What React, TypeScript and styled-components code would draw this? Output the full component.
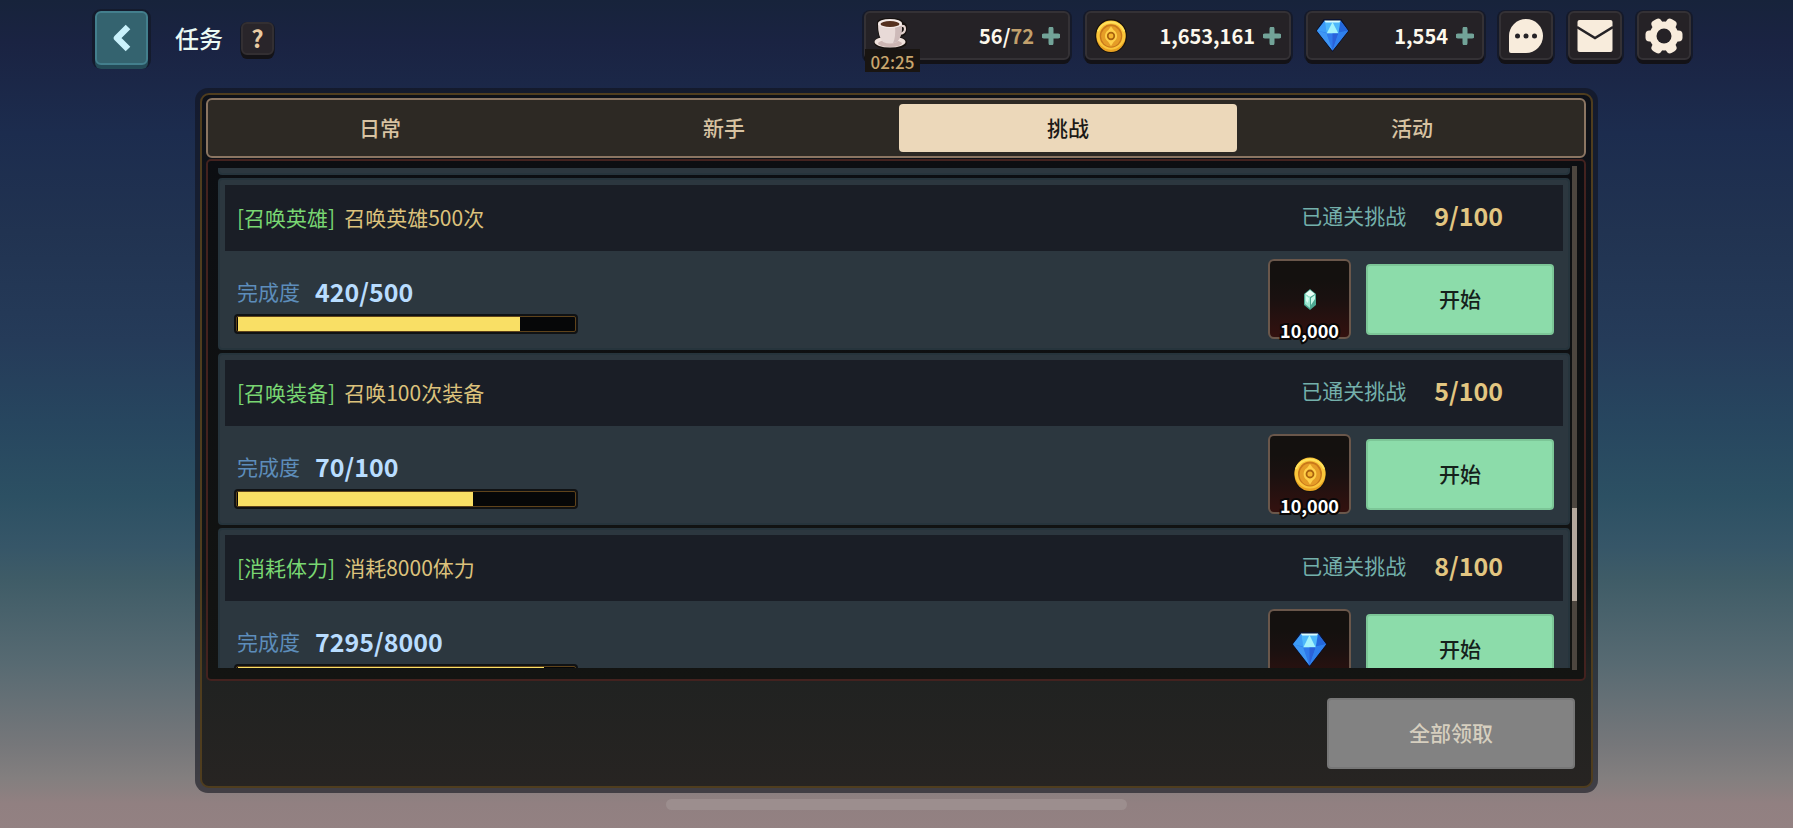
import React from "react";
import styled, { createGlobalStyle } from "styled-components";

const sans = `"Noto Sans CJK SC", "Noto Sans", sans-serif`;

const GlobalStyle = createGlobalStyle`
  *, *::before, *::after { box-sizing: border-box; }
  html, body, #root { height: 100%; }
  body { margin: 0; font-family: ${sans}; font-size: 21px; line-height: 28px; color: #f7ecdc; }
  button { font: inherit; color: inherit; border: 0; padding: 0; cursor: pointer; }
  h1, h2, p { margin: 0; font-weight: 400; }
  svg { display: block; }
`;

const Screen = styled.div`
  display: flex;
  flex-direction: column;
  height: 100vh;
  min-height: 560px;
  overflow: hidden;
  background: linear-gradient(
    180deg,
    #17233b 0%,
    #1a2342 5%,
    #1c2c4e 16%,
    #213351 28%,
    #253b59 41%,
    #27465f 51%,
    #2c5063 60%,
    #365668 66%,
    #3f5c67 70%,
    #576a72 80%,
    #76777a 90%,
    #837f7f 94%,
    #918081 97%,
    #938182 100%
  );
`;

const TopBar = styled.header`
  display: flex;
  justify-content: space-between;
  align-items: flex-start;
  padding: 11px 102px 0 95px;
  height: 88px;
  flex: none;
`;

const TitleGroup = styled.div`
  display: flex;
  align-items: center;
`;

const BackButton = styled.button`
  display: grid;
  place-items: center;
  width: 53px;
  height: 54px;
  border-radius: 6px;
  background: #34636f;
  border: 2px solid #437f8d;
  box-shadow: 0 4px 0 #244b58, 0 1px 0 3px #141b2d;
`;

const Title = styled.h1`
  margin-left: 27px;
  font-size: 24px;
  line-height: 32px;
  font-weight: 500;
  color: #eafaf4;
`;

const HelpButton = styled.button`
  width: 33px;
  height: 33px;
  margin-left: 18px;
  border-radius: 6px;
  background: #29252a;
  border: 2px solid #332f32;
  box-shadow: 0 4px 0 #141317, 0 1px 0 1px #141825;
  color: #eacba2;
  font-size: 24px;
  line-height: 28px;
  font-weight: 700;
`;

const Resources = styled.div`
  display: flex;
  gap: 15px;
`;

const Plate = styled.div<{ $wide?: boolean }>`
  display: flex;
  align-items: center;
  position: relative;
  width: ${(p) => (p.$wide ? 206 : 178)}px;
  height: 49px;
  padding: 0 7px 0 8px;
  border-radius: 6px;
  background: #252226;
  border: 2px solid #343135;
  box-shadow: 0 4px 0 #131217, 0 1px 0 2px #151a2a;
`;

const Amount = styled.span`
  flex: 1;
  text-align: right;
  font-size: 20px;
  font-weight: 700;
  color: #fdf8ec;
`;

const Limit = styled.span`
  color: #c2a06c;
`;

const AddButton = styled.button`
  display: grid;
  place-items: center;
  width: 20px;
  height: 24px;
  margin-left: 7px;
  background: none;
`;

const Timer = styled.span`
  position: absolute;
  left: -1px;
  top: 36px;
  width: 55px;
  height: 23px;
  background: #191512;
  color: #c9a66e;
  font-size: 17px;
  line-height: 25px;
  font-weight: 500;
  text-align: center;
`;

const IconButton = styled.button`
  display: grid;
  place-items: center;
  width: 54px;
  height: 49px;
  border-radius: 6px;
  background: #252226;
  border: 2px solid #343135;
  box-shadow: 0 4px 0 #131217, 0 1px 0 2px #151a2a;
`;

const Panel = styled.main`
  display: flex;
  flex-direction: column;
  flex: 1;
  min-height: 0;
  margin: 0 195px;
  padding: 5px;
  border-radius: 13px;
  background: rgba(16, 19, 28, 0.6);
`;

const PanelBody = styled.div`
  display: flex;
  flex-direction: column;
  flex: 1;
  min-height: 0;
  border: 2px solid #4f3d1e;
  border-radius: 9px;
  padding: 3px 5px 17px 4px;
  background: linear-gradient(180deg, #0e1118 0%, #101416 70%, #202221 84%, #272422 100%);
`;

const Tabs = styled.nav`
  display: grid;
  grid-template-columns: repeat(4, 1fr);
  flex: none;
  height: 60px;
  padding: 4px 0;
  border: 2px solid #8b7562;
  border-radius: 6px;
  background: #2d2924;
`;

const Tab = styled.button<{ $active?: boolean }>`
  margin: 0 3px;
  padding-bottom: 3px;
  border-radius: 4px;
  font-weight: 500;
  background: ${(p) => (p.$active ? "#ecd8ba" : "transparent")};
  color: ${(p) => (p.$active ? "#1d1a17" : "#d8c3a2")};
`;

const ListFrame = styled.section`
  display: flex;
  flex: 1;
  min-height: 0;
  gap: 2px;
  margin-top: 1px;
  padding: 7px 7px 11px 10px;
  border: 2px solid #43221f;
  border-radius: 5px;
  background: linear-gradient(180deg, #0c0e12, #131412);
`;

const List = styled.div`
  display: flex;
  flex-direction: column;
  flex: 1;
  gap: 3px;
  min-width: 0;
  overflow: hidden;
`;

const cardSurface = `
  flex: none;
  border: 2px solid #26343c;
  background: #2c373f;
`;

const CardEdge = styled.div`
  ${cardSurface}
  height: 7px;
  border-top: 0;
  border-radius: 0 0 4px 4px;
`;

const Card = styled.article`
  ${cardSurface}
  height: 172px;
  padding: 5px;
  border-radius: 4px;
`;

const CardHeader = styled.div`
  display: flex;
  align-items: center;
  height: 66px;
  padding: 0 60px 3px 12px;
  background: #1a1e26;
`;

const QuestTitle = styled.h2`
  flex: 1;
  font-size: 21px;
  line-height: 28px;
  font-weight: 400;
  color: #dcc27c;
`;

const Tag = styled.span`
  margin-right: 9px;
  color: #79d672;
`;

const ClearedLabel = styled.span`
  margin-bottom: 4px;
  color: #74b0ab;
`;

const Figures = styled.span<{ $gold?: boolean }>`
  font-size: 25px;
  font-weight: 700;
  margin-left: ${(p) => (p.$gold ? 28 : 15)}px;
  margin-bottom: ${(p) => (p.$gold ? 4 : 0)}px;
  color: ${(p) => (p.$gold ? "#e2c681" : "#b9ddff")};
`;

const CardBody = styled.div`
  display: flex;
  align-items: flex-start;
  padding: 8px 9px 0;
`;

const Completion = styled.div`
  flex: 1;
`;

const CompletionText = styled.p`
  display: flex;
  align-items: center;
  padding: 18px 0 9px 3px;
  color: #5d8dba;
`;

const Bar = styled.div`
  width: 344px;
  height: 20px;
  padding: 2px;
  border-radius: 4px;
  background: #101214;
`;

const BarTrack = styled.div`
  height: 16px;
  padding: 0 1px;
  border: 1px solid #5f431b;
  border-radius: 2px;
  background: #060708;
`;

const BarFill = styled.div`
  height: 14px;
  background: #f9df65;
`;

const Reward = styled.div`
  position: relative;
  display: grid;
  place-items: center;
  width: 83px;
  height: 80px;
  border: 2px solid #6a574b;
  border-radius: 6px;
  background: linear-gradient(180deg, #14110f 25%, #1a1110 50%, #33110f 100%);
`;

const RewardCount = styled.span`
  position: absolute;
  left: 0;
  right: 0;
  bottom: -6px;
  text-align: center;
  font-size: 18px;
  font-weight: 700;
  color: #fff;
  line-height: 26px;
  paint-order: stroke fill;
  -webkit-text-stroke: 4px #0a0808;
`;

const StartButton = styled.button`
  width: 188px;
  height: 71px;
  margin: 5px 0 0 15px;
  padding-bottom: 3px;
  border: 2px solid #7cc697;
  border-radius: 4px;
  background: #8cdcaa;
  color: #15211b;
  font-weight: 500;
`;

const ScrollTrack = styled.div`
  display: flex;
  flex-direction: column;
  width: 5px;
  margin: -2px 0;
  padding-top: 342px;
  background: #4d463f;
`;

const ScrollThumb = styled.div`
  height: 93px;
  background: #b5a89c;
`;

const Footer = styled.footer`
  display: flex;
  justify-content: flex-end;
  flex: none;
  padding: 17px 11px 0 0;
`;

const ClaimAll = styled.button`
  width: 248px;
  height: 71px;
  padding-bottom: 3px;
  border: 2px solid #777;
  border-radius: 4px;
  background: #828282;
  color: #d6cfbf;
  font-weight: 500;
`;

const HomeBar = styled.div`
  flex: none;
  width: 461px;
  height: 11px;
  margin: 6px auto 18px;
  border-radius: 6px;
  background: #9c8e8e;
`;

const Coin = ({ size }: { size: number }) => (
  <svg width={size} height={size + 2} viewBox="0 0 34 36" aria-hidden="true">
    <ellipse cx="17" cy="18" rx="17" ry="18" fill="#17120f" />
    <ellipse cx="17" cy="18.500" rx="15.500" ry="16.500" fill="#e8a122" />
    <ellipse cx="17" cy="17" rx="15.500" ry="15.500" fill="#fbc63a" />
    <path d="M3 13A15 15 0 0 1 31 13" fill="none" stroke="#ffe25c" strokeWidth="2" />
    <ellipse cx="17" cy="18" rx="12" ry="12.500" fill="#c9781b" />
    <ellipse cx="17" cy="18.500" rx="10.500" ry="11" fill="#e59d27" />
    <path d="M17 8l3 4a7 7 0 0 1 0 12l-3 4.500-3-4.500a7 7 0 0 1 0-12z" fill="#ffd049" />
    <circle cx="17" cy="18" r="3.500" fill="#f6b62f" stroke="#a8620f" strokeWidth="1.800" />
  </svg>
);

const Diamond = ({ size }: { size: number }) => (
  <svg width={size} height={size} viewBox="0 0 34 34" aria-hidden="true">
    <path d="M8 0h18l8 12-17 22L0 12z" fill="#0b1330" />
    <path d="M8.500 2h17L33 12 17 32.500 1 12z" fill="#2f86f0" />
    <path d="M1 12l8-10 2 12z" fill="#3d9cf7" />
    <path d="M33 12l-7.500-10L23 14z" fill="#2467dc" />
    <path d="M9 2h16l-2 13H11z" fill="#4db8fb" />
    <path d="M8.500 1.500h17l-1.500 2H10z" fill="#d9fbff" />
    <path d="M17 3l6 12H11z" fill="#a4f3fb" />
    <path d="M1 12l10 3 6 17.500z" fill="#3f97f5" />
    <path d="M11 15h12l-6 17.500z" fill="#2f7aec" />
    <path d="M17 15h6l-6 17.500z" fill="#2a62da" />
    <path d="M33 12l-10 3-6 17.500z" fill="#2f80ee" />
  </svg>
);

const Crystal = () => (
  <svg width="14" height="21" viewBox="0 0 14 21" aria-hidden="true">
    <path d="M7 0l6 5v11l-6 5-6-5V5z" fill="#4da993" />
    <path d="M7 1l5 4-5 3-5-3z" fill="#e9fff7" />
    <path d="M2 5l5 3v11l-5-4z" fill="#9fe9d2" />
    <path d="M8 9l4-3v4l-4 6z" fill="#c6f8e8" />
    <path d="M3 7l3 2-1 5-2-2z" fill="#d9fff3" />
  </svg>
);

const Cup = () => (
  <svg width="34" height="36" viewBox="0 0 34 36" aria-hidden="true">
    <ellipse cx="16.500" cy="24.500" rx="16.500" ry="7" fill="#17120f" />
    <path d="M3 4Q4 0 16 0t13 4q5 1 4 8-1 7-7 7l-2 5H8Q3 18 3 4z" fill="#17120f" />
    <ellipse cx="16" cy="24" rx="15.500" ry="5.500" fill="#f0e2dd" />
    <ellipse cx="16" cy="25.500" rx="12" ry="3.500" fill="#cdb6b3" />
    <path d="M27 8q4-1 4 3 0 4-5 5" fill="none" stroke="#e4d3cf" strokeWidth="2.200" />
    <path d="M4 6h24q0 13-5 18-7 3-14 0Q4 19 4 6z" fill="#e8dad7" />
    <path d="M21 8h7q0 11-5 16-2 1-4 1 3-6 2-17z" fill="#cdbab9" />
    <ellipse cx="16" cy="5.500" rx="12" ry="4.500" fill="#f5ebe8" />
    <ellipse cx="16" cy="6" rx="9.500" ry="3" fill="#55311f" />
  </svg>
);

const Plus = () => (
  <svg width="18" height="18" viewBox="0 0 18 18" aria-hidden="true">
    <path d="M9 2v14M2 9h14" stroke="#72a398" strokeWidth="5" strokeLinecap="round" />
  </svg>
);

type Quest = {
  tag: string;
  title: string;
  cleared: number;
  done: number;
  goal: number;
  icon: React.ReactNode;
  reward?: string;
};

const quests: Quest[] = [
  { tag: "召唤英雄", title: "召唤英雄500次", cleared: 9, done: 420, goal: 500, icon: <Crystal />, reward: "10,000" },
  { tag: "召唤装备", title: "召唤100次装备", cleared: 5, done: 70, goal: 100, icon: <Coin size={34} />, reward: "10,000" },
  { tag: "消耗体力", title: "消耗8000体力", cleared: 8, done: 7295, goal: 8000, icon: <Diamond size={35} /> },
];

const tabs = ["日常", "新手", "挑战", "活动"];

function QuestCard({ quest }: { quest: Quest }) {
  return (
    <Card>
      <CardHeader>
        <QuestTitle>
          <Tag>[{quest.tag}]</Tag>
          {quest.title}
        </QuestTitle>
        <ClearedLabel>已通关挑战</ClearedLabel>
        <Figures $gold>{`${quest.cleared}/100`}</Figures>
      </CardHeader>
      <CardBody>
        <Completion>
          <CompletionText>
            完成度
            <Figures>{`${quest.done}/${quest.goal}`}</Figures>
          </CompletionText>
          <Bar role="progressbar" aria-label={quest.title} aria-valuenow={quest.done} aria-valuemax={quest.goal}>
            <BarTrack>
              <BarFill style={{ width: `${(quest.done / quest.goal) * 100}%` }} />
            </BarTrack>
          </Bar>
        </Completion>
        <Reward>
          {quest.icon}
          {quest.reward && <RewardCount>{quest.reward}</RewardCount>}
        </Reward>
        <StartButton type="button">开始</StartButton>
      </CardBody>
    </Card>
  );
}

export default function App() {
  return (
    <>
      <GlobalStyle />
      <Screen>
        <TopBar>
          <TitleGroup>
            <BackButton type="button" aria-label="返回">
              <svg width="24" height="30" viewBox="0 0 24 30" aria-hidden="true">
                <path d="M18 4L7 15l11 11" fill="none" stroke="#c9f1fb" strokeWidth="6.500" strokeLinejoin="round" />
              </svg>
            </BackButton>
            <Title>任务</Title>
            <HelpButton type="button">?</HelpButton>
          </TitleGroup>
          <Resources>
            <Plate $wide>
              <Cup />
              <Amount>
                56/<Limit>72</Limit>
              </Amount>
              <AddButton type="button" aria-label="补充体力">
                <Plus />
              </AddButton>
              <Timer>02:25</Timer>
            </Plate>
            <Plate $wide>
              <Coin size={32} />
              <Amount>1,653,161</Amount>
              <AddButton type="button" aria-label="补充金币">
                <Plus />
              </AddButton>
            </Plate>
            <Plate>
              <Diamond size={33} />
              <Amount>1,554</Amount>
              <AddButton type="button" aria-label="补充钻石">
                <Plus />
              </AddButton>
            </Plate>
            <IconButton type="button" aria-label="聊天">
              <svg width="36" height="36" viewBox="0 0 36 36" aria-hidden="true">
                <path d="M18 1a17 17 0 1 1 0 34H3q-2 0-2-2V18A17 17 0 0 1 18 1z" fill="#f8ecdc" />
                <circle cx="9.500" cy="18" r="2.500" fill="#252226" />
                <circle cx="18" cy="18" r="2.500" fill="#252226" />
                <circle cx="26.500" cy="18" r="2.500" fill="#252226" />
              </svg>
            </IconButton>
            <IconButton type="button" aria-label="邮件">
              <svg width="36" height="34" viewBox="0 0 36 34" aria-hidden="true">
                <rect x="0.500" y="1" width="35" height="32" rx="2" fill="#f8ecdc" />
                <path d="M0 8l18 11L36 8" fill="none" stroke="#252226" strokeWidth="2.500" />
              </svg>
            </IconButton>
            <IconButton type="button" aria-label="设置">
              <svg width="38" height="38" viewBox="-19 -19 38 38" aria-hidden="true">
                <g fill="#f8ecdc">
                  <circle r="14.500" />
                  {[0, 60, 120, 180, 240, 300].map((a) => (
                    <rect key={a} x="8" y="-5.500" width="10.500" height="11" rx="4" transform={`rotate(${a})`} />
                  ))}
                </g>
                <circle r="7.500" fill="#252226" />
              </svg>
            </IconButton>
          </Resources>
        </TopBar>
        <Panel>
          <PanelBody>
            <Tabs>
              {tabs.map((name) => (
                <Tab key={name} type="button" $active={name === "挑战"}>
                  {name}
                </Tab>
              ))}
            </Tabs>
            <ListFrame>
              <List>
                <CardEdge />
                {quests.map((quest) => (
                  <QuestCard key={quest.tag} quest={quest} />
                ))}
              </List>
              <ScrollTrack>
                <ScrollThumb />
              </ScrollTrack>
            </ListFrame>
            <Footer>
              <ClaimAll type="button">全部领取</ClaimAll>
            </Footer>
          </PanelBody>
        </Panel>
        <HomeBar />
      </Screen>
    </>
  );
}
